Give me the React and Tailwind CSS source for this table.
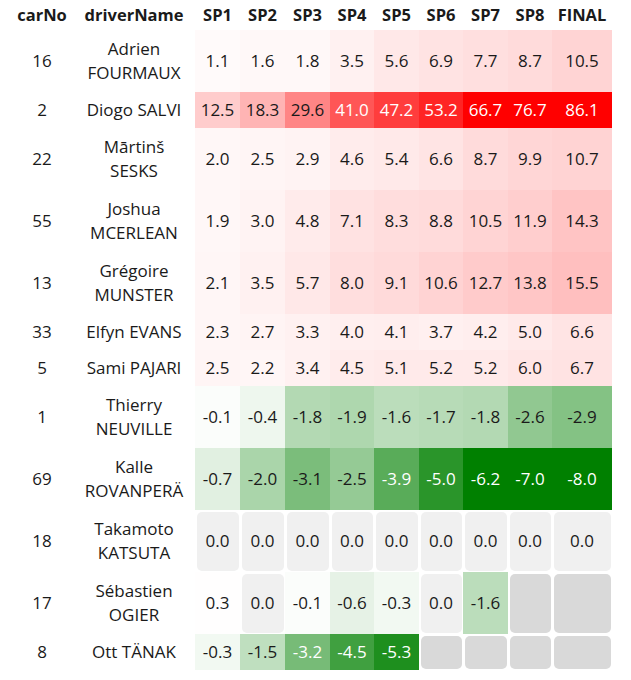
const COLS = ['SP1', 'SP2', 'SP3', 'SP4', 'SP5', 'SP6', 'SP7', 'SP8', 'FINAL'];

const ROWS = [
  { car: 16, name: ['Adrien', 'FOURMAUX'], v: [1.1, 1.6, 1.8, 3.5, 5.6, 6.9, 7.7, 8.7, 10.5] },
  { car: 2, name: ['Diogo SALVI'], v: [12.5, 18.3, 29.6, 41.0, 47.2, 53.2, 66.7, 76.7, 86.1] },
  { car: 22, name: ['Mārtinš', 'SESKS'], v: [2.0, 2.5, 2.9, 4.6, 5.4, 6.6, 8.7, 9.9, 10.7] },
  { car: 55, name: ['Joshua', 'MCERLEAN'], v: [1.9, 3.0, 4.8, 7.1, 8.3, 8.8, 10.5, 11.9, 14.3] },
  { car: 13, name: ['Grégoire', 'MUNSTER'], v: [2.1, 3.5, 5.7, 8.0, 9.1, 10.6, 12.7, 13.8, 15.5] },
  { car: 33, name: ['Elfyn EVANS'], v: [2.3, 2.7, 3.3, 4.0, 4.1, 3.7, 4.2, 5.0, 6.6] },
  { car: 5, name: ['Sami PAJARI'], v: [2.5, 2.2, 3.4, 4.5, 5.1, 5.2, 5.2, 6.0, 6.7] },
  { car: 1, name: ['Thierry', 'NEUVILLE'], v: [-0.1, -0.4, -1.8, -1.9, -1.6, -1.7, -1.8, -2.6, -2.9] },
  { car: 69, name: ['Kalle', 'ROVANPERÄ'], v: [-0.7, -2.0, -3.1, -2.5, -3.9, -5.0, -6.2, -7.0, -8.0] },
  { car: 18, name: ['Takamoto', 'KATSUTA'], v: [0, 0, 0, 0, 0, 0, 0, 0, 0] },
  { car: 17, name: ['Sébastien', 'OGIER'], v: [0.3, 0, -0.1, -0.6, -0.3, 0, -1.6, null, null] },
  { car: 8, name: ['Ott TÄNAK'], v: [-0.3, -1.5, -3.2, -4.5, -5.3, null, null, null, null] },
];

const GRID = 'grid grid-cols-[84px_111px_45px_45px_45px_44px_45px_44px_45px_44px_60px]';

// white -> red for time lost, white -> green for time gained
function cellColor(v) {
  if (v > 0) {
    const t = Math.min(1, v / 62);
    const g = Math.round(255 * (1 - t));
    return `rgb(255, ${g}, ${g})`;
  }
  const t = Math.min(1, -v / 6);
  const rb = Math.round(255 * (1 - t));
  const g = Math.round(255 - 127 * t);
  return `rgb(${rb}, ${g}, ${rb})`;
}

function Cell({ v }) {
  if (v === null) {
    return (
      <div className="flex">
        <div className="m-[1.5px] flex-1 rounded-[5px] bg-[#d9d9d9]" />
      </div>
    );
  }
  if (v === 0) {
    return (
      <div className="flex">
        <div className="m-[1.5px] flex flex-1 items-center justify-center rounded-[5px] bg-[#f0f0f0]">0.0</div>
      </div>
    );
  }
  const light = v >= 35 || v <= -3.15;
  return (
    <div
      className={`flex items-center justify-center ${light ? 'text-white' : ''}`}
      style={{ backgroundColor: cellColor(v) }}
    >
      {v.toFixed(1)}
    </div>
  );
}

export default function App() {
  return (
    <div className="bg-white w-[631px] h-[680px] text-[17px] text-[#1a1a1a] font-['Open_Sans',sans-serif]">
      <div className={`${GRID} h-[30px] items-center font-bold text-center text-[16.5px] leading-[22px]`}>
        <div>carNo</div>
        <div className="pr-[11px]">driverName</div>
        {COLS.map(c => <div key={c}>{c}</div>)}
      </div>

      {ROWS.map(row => (
        <div key={row.car} className={`${GRID} leading-[24px]`}>
          <div className="flex items-center justify-center">{row.car}</div>
          <div className={`flex flex-col items-center justify-center pr-[11px] text-center ${row.name.length > 1 ? 'py-[7px]' : 'py-[6px]'}`}>
            {row.name.map(n => <span key={n}>{n}</span>)}
          </div>
          {row.v.map((v, i) => <Cell key={i} v={v} />)}
        </div>
      ))}
    </div>
  );
}
